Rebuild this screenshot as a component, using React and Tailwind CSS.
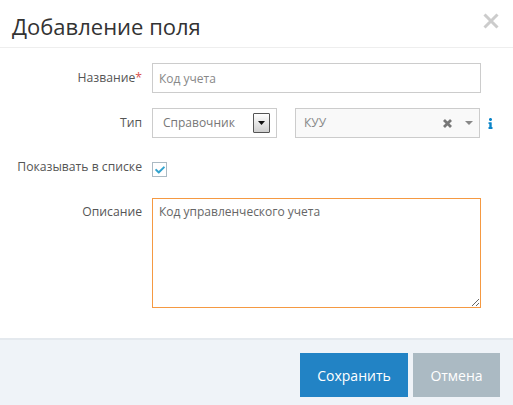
import { FaCheck, FaInfo } from "react-icons/fa";

const Label = ({ children, className = "" }) => (
  <label className={`w-[142px] shrink-0 text-right text-[12.2px] text-[#555] ${className}`}>
    {children}
  </label>
);

export default function App() {
  return (
    <div className="w-[513px] h-[405px] bg-white flex flex-col overflow-hidden font-['Open_Sans',sans-serif]">
      <div className="h-[48px] shrink-0 border-b border-[#eeeeee] pl-3 pr-[14px] flex items-center justify-between">
        <h3 className="text-[22px] leading-[28px] text-[#333] mt-[4px]">Добавление поля</h3>
        <svg width="16" height="16" viewBox="0 0 16 16" className="mb-[5px]">
          <path d="M1.5 1.5 L14.5 14.5 M14.5 1.5 L1.5 14.5" stroke="#cccccc" strokeWidth="3" />
        </svg>
      </div>

      <div className="flex-1 pt-[15px]">
        <div className="flex items-center gap-[10px] h-[30px]">
          <Label>
            Название<span className="text-[#d9534f]">*</span>
          </Label>
          <input
            readOnly
            value="Код учета"
            className="w-[329px] h-[30px] border-[1px] border-[#cccccc] px-[6px] text-[12px] text-[#888] outline-none"
          />
        </div>

        <div className="flex items-center gap-[10px] h-[30px] mt-[15px]">
          <Label>Тип</Label>
          <div className="w-[125px] h-[30px] border border-[#cccccc] flex items-center justify-between pl-[10px] pr-[6px] text-[12px] text-[#777]">
            <span>Справочник</span>
            <span className="w-[17px] h-[20px] border border-[#555] rounded-[1px] bg-gradient-to-b from-white to-[#cfcfcf] flex items-center justify-center">
              <svg width="7" height="4" viewBox="0 0 7 4">
                <path d="M0 0 H7 L3.5 4 Z" fill="#111" />
              </svg>
            </span>
          </div>
          <div className="ml-[8px] w-[185px] h-[30px] border border-[#cccccc] bg-[#f9f9f9] flex items-center pl-[8px] pr-[5px] text-[12px] text-[#888]">
            <span className="flex-1">КУУ</span>
            <svg width="9" height="9" viewBox="0 0 9 9">
              <path d="M1 1 L8 8 M8 1 L1 8" stroke="#777" strokeWidth="2.8" />
            </svg>
            <svg width="8" height="4" viewBox="0 0 8 4" className="ml-[13px] mr-[1px]">
              <path d="M0 0 H8 L4 4 Z" fill="#888" />
            </svg>
          </div>
          <FaInfo size={11} className="-ml-[5px] text-[#0a84c8]" />
        </div>

        <div className="flex items-start gap-[10px] mt-[15px] h-[45px]">
          <Label className="mt-[5px] leading-[18px]">Показывать в списке</Label>
          <span className="mt-[9px] w-[15px] h-[15px] border border-[#abbac3] flex items-center justify-center">
            <FaCheck size={10} className="text-[#32a3ce]" />
          </span>
        </div>

        <div className="flex items-start gap-[10px]">
          <Label className="mt-[5px] leading-[18px]">Описание</Label>
          <textarea
            readOnly
            value="Код управленческого учета"
            className="w-[329px] h-[110px] border border-[#f59942] px-[6px] py-[4px] text-[12px] leading-[18px] text-[#666] outline-none"
          />
        </div>
      </div>

      <div className="h-[67px] shrink-0 bg-[#eff3f8] border-t-2 border-[#e4e9ee] flex items-start justify-end gap-[5px] pt-[13px] pr-[13px]">
        <button className="w-[108px] h-[44px] bg-[#2283c5] text-white text-[14px]">Сохранить</button>
        <button className="w-[87px] h-[44px] bg-[#abbac3] text-white text-[14px]">Отмена</button>
      </div>
    </div>
  );
}
